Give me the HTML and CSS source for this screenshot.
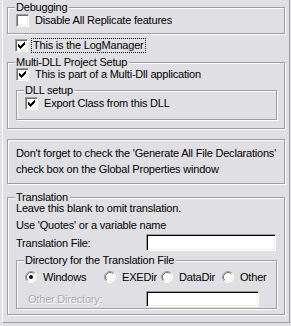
FILE: index.html
```html
<!DOCTYPE html>
<html lang="en">

<head>
    <meta charset="UTF-8">
    <title>LogManager Options</title>
    <link rel="stylesheet" href="styles.css">
</head>

<body>

    <div class="panel">

        <div class="group group-debug">
            <span class="group-title">Debugging</span>
            <div class="row">
                <span class="check"></span>
                <span class="label">Disable All Replicate features</span>
            </div>
        </div>

        <div class="row row-log">
            <span class="check checked"></span>
            <span class="label focus">This is the LogManager</span>
        </div>

        <div class="group group-multi">
            <span class="group-title">Multi-DLL Project Setup</span>
            <div class="row">
                <span class="check checked"></span>
                <span class="label">This is part of a Multi-Dll application</span>
            </div>
            <div class="group group-dll">
                <span class="group-title">DLL setup</span>
                <div class="row">
                    <span class="check checked"></span>
                    <span class="label">Export Class from this DLL</span>
                </div>
            </div>
        </div>

        <div class="group group-note">
            <div class="line">Don't forget to check the 'Generate All File Declarations'</div>
            <div class="line">check box on the Global Properties window</div>
        </div>

        <div class="group group-trans">
            <span class="group-title">Translation</span>
            <div class="line-tall">Leave this blank to omit translation.</div>
            <div class="line-tall">Use 'Quotes' or a variable name</div>
            <div class="field-row">
                <span class="field-label">Translation File:</span>
                <span class="textbox textbox-file"></span>
            </div>

            <div class="group group-dir">
                <span class="group-title">Directory for the Translation File</span>
                <div class="radio-row">
                    <span class="radio-item radio-windows"><span class="radio on"></span>Windows</span>
                    <span class="radio-item radio-exe"><span class="radio"></span>EXEDir</span>
                    <span class="radio-item radio-data"><span class="radio"></span>DataDir</span>
                    <span class="radio-item"><span class="radio"></span>Other</span>
                </div>
                <div class="field-row field-other">
                    <span class="field-label disabled">Other Directory:</span>
                    <span class="textbox textbox-other"></span>
                </div>
            </div>
        </div>

    </div>

</body>

</html>
```

FILE: styles.css
```css
body {
    margin: 0;
    padding: 0 1px 3px 2px;
    background-color: #e0dfe3;
    font-family: "Liberation Sans", Arial, sans-serif;
    font-size: 11px;
    letter-spacing: -0.2px;
    color: #000;
}

.panel {
    border-left: 1px solid #fff;
    border-right: 1px solid #9d9da1;
    border-bottom: 1px solid #9d9da1;
    padding: 7px 4px 7px 4px;
}

/* etched group box */
.group {
    position: relative;
    border: 1px solid #9d9da1;
    box-shadow: inset 1px 1px 0 #fff, 1px 1px 0 #fff;
}

.group-title {
    position: absolute;
    top: -7px;
    left: 7px;
    padding: 0 2px 0 1px;
    line-height: 13px;
    background-color: #e0dfe3;
    white-space: nowrap;
}

.group-debug {
    padding: 6px 0 6px 8px;
}

.group-multi {
    margin-top: 10px;
    padding: 5px 7px 8px 8px;
}

.group-dll {
    margin-top: 9px;
    padding: 6px 0 9px 8px;
}

.group-note {
    margin-top: 10px;
    padding: 5px 0 6px 8px;
}

.group-trans {
    margin-top: 13px;
    padding: 2px 7px 5px 8px;
}

.group-dir {
    margin-top: 9px;
    padding: 7px 0 1px 8px;
}

.row {
    display: flex;
    align-items: center;
    height: 13px;
    line-height: 13px;
    white-space: nowrap;
}

.row-log {
    margin-top: 5px;
    margin-left: 8px;
}

.label {
    margin-left: 6px;
}

.focus {
    margin-left: 4px;
    padding: 0 1px;
    outline: 1px dotted #000;
}

/* classic sunken checkbox */
.check {
    position: relative;
    width: 13px;
    height: 13px;
    box-sizing: border-box;
    flex-shrink: 0;
    background-color: #fff;
    border: 1px solid;
    border-color: #9d9da1 #fff #fff #9d9da1;
    box-shadow: inset 1px 1px 0 #716f64, inset -1px -1px 0 #f1efe2;
}

.check.checked::after {
    content: "";
    position: absolute;
    left: 2px;
    top: 2px;
    width: 7px;
    height: 7px;
    background: url("data:image/svg+xml,%3Csvg xmlns='http://www.w3.org/2000/svg' width='7' height='7' shape-rendering='crispEdges'%3E%3Cpath d='M0 2h1v3H0zM1 3h1v3H1zM2 4h1v3H2zM3 3h1v3H3zM4 2h1v3H4zM5 1h1v3H5zM6 0h1v3H6z' fill='%23000'/%3E%3C/svg%3E") no-repeat;
}

.line {
    line-height: 16px;
    white-space: nowrap;
}

.line-tall {
    height: 17px;
    line-height: 17px;
    white-space: nowrap;
}

.field-row {
    display: flex;
    align-items: center;
    height: 17px;
}

.field-label {
    width: 130px;
    flex-shrink: 0;
    white-space: nowrap;
}

.textbox {
    display: block;
    box-sizing: border-box;
    background-color: #fff;
    border: 1px solid;
    border-color: #9d9da1 #fff #fff #9d9da1;
    box-shadow: inset 1px 1px 0 #000, inset -1px -1px 0 #f1efe2;
}

.textbox-file {
    width: 130px;
    height: 17px;
}

.field-other {
    margin-top: 5px;
    padding-left: 3px;
}

.field-other .field-label {
    width: 118px;
}

.textbox-other {
    width: 113px;
    height: 16px;
}

.disabled {
    color: #aaa9ad;
    text-shadow: 1px 1px 0 #fff;
}

.radio-row {
    display: flex;
    align-items: center;
    height: 17px;
    white-space: nowrap;
}

.radio-item {
    display: flex;
    align-items: center;
}

.radio-windows {
    width: 79px;
}

.radio-exe {
    width: 57px;
}

.radio-data {
    width: 61px;
}

.radio {
    width: 12px;
    height: 12px;
    margin-right: 6px;
    flex-shrink: 0;
    background: url("data:image/svg+xml,%3Csvg xmlns='http://www.w3.org/2000/svg' width='12' height='12'%3E%3Ccircle cx='6' cy='6' r='5' fill='%23fff'/%3E%3Cpath d='M2.11 9.89A5.5 5.5 0 0 1 9.89 2.11' fill='none' stroke='%239d9da1'/%3E%3Cpath d='M9.89 2.11A5.5 5.5 0 0 1 2.11 9.89' fill='none' stroke='%23fff'/%3E%3Cpath d='M2.82 9.18A4.5 4.5 0 0 1 9.18 2.82' fill='none' stroke='%23716f64'/%3E%3Cpath d='M9.18 2.82A4.5 4.5 0 0 1 2.82 9.18' fill='none' stroke='%23f1efe2'/%3E%3C/svg%3E") no-repeat;
}

.radio.on {
    background: url("data:image/svg+xml,%3Csvg xmlns='http://www.w3.org/2000/svg' width='12' height='12'%3E%3Ccircle cx='6' cy='6' r='5' fill='%23fff'/%3E%3Cpath d='M2.11 9.89A5.5 5.5 0 0 1 9.89 2.11' fill='none' stroke='%239d9da1'/%3E%3Cpath d='M9.89 2.11A5.5 5.5 0 0 1 2.11 9.89' fill='none' stroke='%23fff'/%3E%3Cpath d='M2.82 9.18A4.5 4.5 0 0 1 9.18 2.82' fill='none' stroke='%23716f64'/%3E%3Cpath d='M9.18 2.82A4.5 4.5 0 0 1 2.82 9.18' fill='none' stroke='%23f1efe2'/%3E%3Ccircle cx='6' cy='6' r='2' fill='%23000'/%3E%3C/svg%3E") no-repeat;
}
```
